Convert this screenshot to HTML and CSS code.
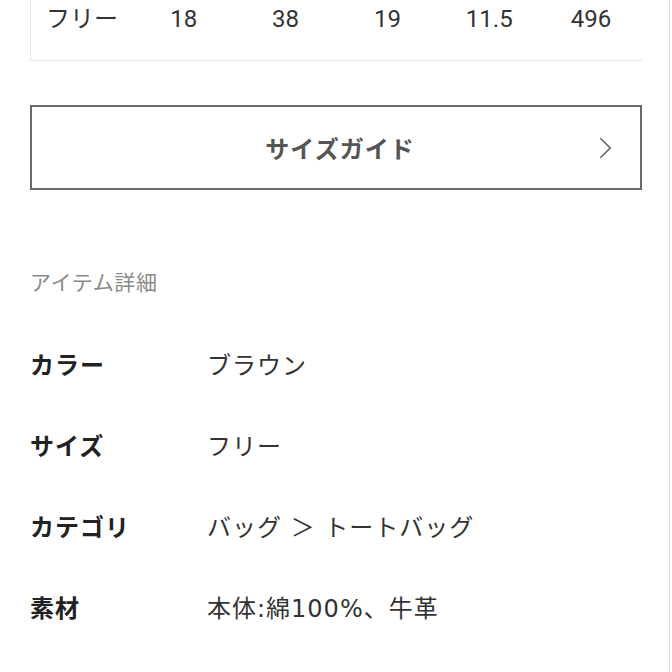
FILE: index.html
```html
<!DOCTYPE html>
<html lang="ja">
<head>
  <meta charset="UTF-8" />
  <meta name="viewport" content="width=device-width, initial-scale=1.0" />
  <title>アイテム詳細</title>
  <link rel="stylesheet" href="styles.css">
</head>
<body>
  <div class="page">

    <!-- サイズ表 -->
    <div class="size-table">
      <div class="size-row">
        <span>フリー</span>
        <span>18</span>
        <span>38</span>
        <span>19</span>
        <span>11.5</span>
        <span>496</span>
      </div>
    </div>

    <!-- サイズガイド -->
    <a class="guide-btn" href="#">
      <span></span>
      <span class="guide-label">サイズガイド</span>
      <svg class="chevron" viewBox="0 0 14 24" xmlns="http://www.w3.org/2000/svg">
        <path d="M1.5 1.5 L12 12 L1.5 22.5" fill="none" stroke="#666" stroke-width="1.8"/>
      </svg>
    </a>

    <!-- アイテム詳細 -->
    <h2 class="section-title">アイテム詳細</h2>
    <dl class="details">
      <div class="detail-row">
        <dt>カラー</dt>
        <dd>ブラウン</dd>
      </div>
      <div class="detail-row">
        <dt>サイズ</dt>
        <dd>フリー</dd>
      </div>
      <div class="detail-row">
        <dt>カテゴリ</dt>
        <dd>バッグ ＞ トートバッグ</dd>
      </div>
      <div class="detail-row">
        <dt>素材</dt>
        <dd>本体:綿100%、牛革</dd>
      </div>
    </dl>

  </div>
</body>
</html>
```

FILE: styles.css
```css
* {
  box-sizing: border-box;
}

html, body {
  margin: 0;
  padding: 0;
  background: #fff;
  color: #333;
  font-family: Roboto, "Noto Sans CJK JP", sans-serif;
}

.page {
  width: 670px;
  min-height: 672px;
  padding: 0 27px 0 30px;
  border-right: 1px solid #dcdcdc;
}

.size-table {
  border-left: 1px solid #e6e6e6;
  border-bottom: 1px solid #e6e6e6;
  padding-bottom: 22px;
}

.size-row {
  display: grid;
  grid-template-columns: repeat(6, 1fr);
  text-align: center;
  font-size: 24px;
  line-height: 38px;
  color: #333;
}

.guide-btn {
  display: grid;
  grid-template-columns: 1fr auto 1fr;
  align-items: center;
  height: 85px;
  margin-top: 44px;
  border: 2px solid #6a6a6a;
  text-decoration: none;
}

.guide-label {
  font-family: "Noto Sans CJK JP", sans-serif;
  font-size: 24px;
  font-weight: bold;
  letter-spacing: 1px;
  color: #555;
  padding-left: 8px;
}

.chevron {
  justify-self: end;
  width: 13px;
  height: 24px;
  margin-right: 28px;
}

.section-title {
  margin: 77px 0 0;
  font-size: 21px;
  line-height: 28px;
  font-weight: normal;
  letter-spacing: 0.6px;
  color: #8a8a8a;
  font-family: "Noto Sans CJK JP", sans-serif;
}

.details {
  margin: 28px 0 0;
}

.detail-row {
  display: flex;
  height: 81px;
  align-items: center;
  font-size: 24px;
  letter-spacing: 1px;
}

.detail-row dt {
  width: 177px;
  font-weight: bold;
  color: #222;
  font-family: "Noto Sans CJK JP", sans-serif;
}

.detail-row dd {
  margin: 0;
  color: #333;
  font-family: "DejaVu Sans", "Noto Sans CJK JP", sans-serif;
}
```
